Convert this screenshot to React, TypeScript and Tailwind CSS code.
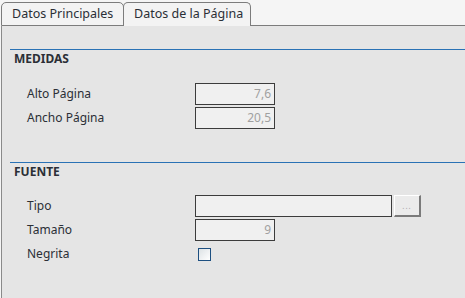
import React from "react";

const font = { fontFamily: '"Noto Sans", "Open Sans", Arial, sans-serif' };

function Field({ label, value, width = "w-[80px]" }: { label: string; value: string; width?: string }) {
  return (
    <div className="flex items-center h-[22px]">
      <div className="w-[185px] pl-[17px] text-[12px] text-[#2b2f36]">{label}</div>
      <div className={`${width} h-[22px] border border-[#3c3c3c] bg-[#f0f0f0] text-right pr-[3px] text-[12px] leading-[20px] text-[#a0a0a0]`}>
        {value}
      </div>
    </div>
  );
}

function SectionTitle({ title }: { title: string }) {
  return (
    <div>
      <div className="h-px bg-[#2a72b5]" />
      <div className="pl-[4px] h-[18px] leading-[18px] text-[12px] font-bold text-[#2b2f36]">{title}</div>
    </div>
  );
}

export default function App() {
  return (
    <div className="w-[465px] h-[298px] overflow-hidden bg-[#f5f5f5] flex flex-col" style={font}>
      {/* pestañas */}
      <div className="flex items-end h-[26px] pl-[1px]">
        <div className="h-[24px] w-[123px] border border-[#7c7c7c] rounded-t-[5px] bg-[#f3f3f3] text-[12.5px] leading-[22px] pl-[10px] text-[#2b2f36]">
          Datos Principales
        </div>
        <div className="h-[24px] w-[128px] -ml-px border border-b-0 border-[#7c7c7c] rounded-t-[5px] bg-[#f3f3f3] text-[12.5px] leading-[22px] pl-[10px] text-[#2b2f36]">
          Datos de la Página
        </div>
        <div className="flex-1 border-b border-[#7c7c7c]" />
      </div>

      {/* panel */}
      <div className="flex-1 ml-[1px] border-l border-[#8a8a8a] bg-[#e5e5e5] pl-[8px]">
        <div className="mt-[23px]">
          <SectionTitle title="MEDIDAS" />
        </div>
        <div className="mt-[15px] flex flex-col gap-[2px]">
          <Field label="Alto Página" value="7,6" />
          <Field label="Ancho Página" value="20,5" />
        </div>

        <div className="mt-[33px]">
          <SectionTitle title="FUENTE" />
        </div>
        <div className="mt-[14px] flex flex-col gap-[2px]">
          <div className="flex items-center h-[22px]">
            <div className="w-[185px] pl-[17px] text-[12px] text-[#2b2f36]">Tipo</div>
            <div className="w-[197px] h-[22px] border border-[#3c3c3c] bg-[#f0f0f0]" />
            <div className="ml-[2px] w-[27px] h-[22px] border-t border-l border-white border-r-2 border-b-2 border-r-[#7a7a7a] border-b-[#7a7a7a] bg-[#ebebeb] text-[8px] leading-[20px] text-center text-[#a8a8a8] tracking-[1px]">
              ...
            </div>
          </div>
          <Field label="Tamaño" value="9" />
          <div className="flex items-center h-[20px] mt-[1px]">
            <div className="w-[185px] pl-[17px] text-[12px] text-[#2b2f36]">Negrita</div>
            <div className="ml-[3px] w-[13px] h-[13px] border border-[#1d4f80] bg-gradient-to-br from-[#dde2e5] to-white" />
          </div>
        </div>
      </div>
    </div>
  );
}
